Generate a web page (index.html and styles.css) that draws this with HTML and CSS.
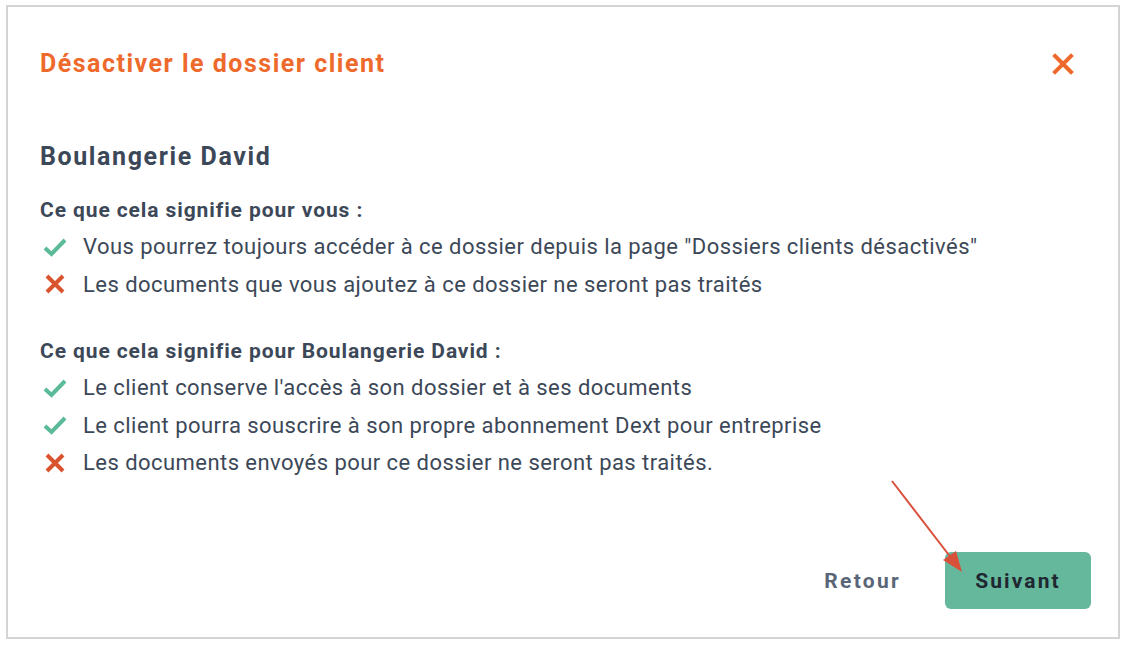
FILE: index.html
```html
<!DOCTYPE html>
<html lang="fr">
<head>
    <meta charset="UTF-8">
    <title>Désactiver le dossier client</title>
    <link rel="stylesheet" href="styles.css">
</head>
<body>
    <div class="modal">
        <header class="modal-header">
            <h1 class="modal-title">Désactiver le dossier client</h1>
            <button class="close-btn" aria-label="Fermer">
                <svg width="22" height="22" viewBox="0 0 22 22"><path d="M3 3 L19 19 M19 3 L3 19" stroke="currentColor" stroke-width="4" stroke-linecap="square"/></svg>
            </button>
        </header>

        <div class="modal-body">
            <h2 class="client-name">Boulangerie David</h2>

            <h3 class="section-title">Ce que cela signifie pour vous :</h3>
            <ul class="impact-list">
                <li class="yes">Vous pourrez toujours accéder à ce dossier depuis la page "Dossiers clients désactivés"</li>
                <li class="no">Les documents que vous ajoutez à ce dossier ne seront pas traités</li>
            </ul>

            <h3 class="section-title second">Ce que cela signifie pour Boulangerie David :</h3>
            <ul class="impact-list">
                <li class="yes">Le client conserve l'accès à son dossier et à ses documents</li>
                <li class="yes">Le client pourra souscrire à son propre abonnement Dext pour entreprise</li>
                <li class="no">Les documents envoyés pour ce dossier ne seront pas traités.</li>
            </ul>
        </div>

        <footer class="modal-footer">
            <button class="btn-link">Retour</button>
            <button class="btn-primary">Suivant</button>
            <svg class="arrow" width="90" height="110" viewBox="0 0 90 110">
                <path d="M2 2 L62 80" stroke="#d9503a" stroke-width="2"/>
                <path d="M72 93 L53 81 L66 72 Z" fill="#d9503a"/>
            </svg>
        </footer>
    </div>
</body>
</html>
```

FILE: styles.css
```css
:root {
    --orange: #ee6a2c;
    --text-dark: #3c4858;
    --green: #66b89d;
    --check: #5bba98;
    --cross: #d9532e;
}

* {
    margin: 0;
    padding: 0;
    box-sizing: border-box;
}

body {
    font-family: Roboto, "Liberation Sans", sans-serif;
    background: #ffffff;
    padding: 5px 10px 0 6px;
}

.modal {
    position: relative;
    width: 1114px;
    height: 634px;
    border: 2px solid #d4d4d4;
    background: #fff;
    display: flex;
    flex-direction: column;
}

.modal-header {
    display: flex;
    justify-content: space-between;
    align-items: center;
    padding: 43px 44px 0 32px;
}

.modal-title {
    color: var(--orange);
    font-size: 25px;
    font-weight: 700;
    letter-spacing: 1.5px;
    line-height: 28px;
}

.close-btn {
    border: none;
    background: none;
    color: var(--orange);
    display: flex;
    cursor: pointer;
}

.modal-body {
    padding: 64px 32px 0;
    color: var(--text-dark);
}

.client-name {
    font-size: 25px;
    font-weight: 700;
    letter-spacing: 1.6px;
    line-height: 30px;
    margin-bottom: 26px;
}

.section-title {
    font-size: 21px;
    font-weight: 700;
    letter-spacing: 0.9px;
    line-height: 24px;
    margin-bottom: 6px;
}

.section-title.second {
    margin-top: 36px;
}

.impact-list {
    list-style: none;
}

.impact-list li {
    font-size: 22px;
    letter-spacing: 0.45px;
    line-height: 37.5px;
    display: flex;
    align-items: center;
    gap: 13px;
}

.impact-list li::before {
    content: "";
    width: 30px;
    height: 24px;
    flex-shrink: 0;
    background-repeat: no-repeat;
    background-position: center;
}

.impact-list li.yes::before {
    background-image: url("data:image/svg+xml,%3Csvg xmlns='http://www.w3.org/2000/svg' width='26' height='20' viewBox='0 0 26 20'%3E%3Cpath d='M3 11 L9.5 17 L23 3' fill='none' stroke='%235bba98' stroke-width='4'/%3E%3C/svg%3E");
}

.impact-list li.no::before {
    background-image: url("data:image/svg+xml,%3Csvg xmlns='http://www.w3.org/2000/svg' width='22' height='22' viewBox='0 0 22 22'%3E%3Cpath d='M3 3 L19 19 M19 3 L3 19' fill='none' stroke='%23d9532e' stroke-width='4'/%3E%3C/svg%3E");
}

.modal-footer {
    margin-top: auto;
    position: relative;
    display: flex;
    justify-content: flex-end;
    align-items: center;
    gap: 44px;
    padding: 0 27px 28px 0;
}

.btn-link {
    border: none;
    background: none;
    font-family: inherit;
    font-size: 21px;
    font-weight: 700;
    letter-spacing: 2.3px;
    color: #5a6678;
}

.btn-primary {
    border: none;
    background: var(--green);
    border-radius: 6px;
    width: 146px;
    height: 57px;
    font-family: inherit;
    font-size: 21px;
    font-weight: 700;
    letter-spacing: 2.1px;
    color: #1f2730;
}

.arrow {
    position: absolute;
    right: 138px;
    bottom: 48px;
}
```
